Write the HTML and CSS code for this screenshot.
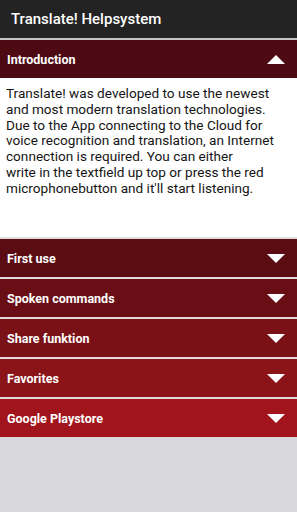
FILE: index.html
```html
<!DOCTYPE html>
<html lang="en">
<head>
    <meta charset="UTF-8">
    <meta name="viewport" content="width=device-width, initial-scale=1.0">
    <title>Translate! Helpsystem</title>
    <link rel="stylesheet" href="styles.css">
</head>
<body>
    <div class="appbar">Translate! Helpsystem</div>
    <div class="accordion">
        <div class="section open">
            <div class="head c0">
                <span>Introduction</span>
                <span class="arrow up"></span>
            </div>
            <div class="body">
                Translate! was developed to use the newest and most modern translation technologies. Due to the App connecting to the Cloud for voice recognition and translation, an Internet connection is required. You can either<br>write in the textfield up top or press the red microphonebutton and it'll start listening.
            </div>
        </div>
        <div class="section">
            <div class="head c1"><span>First use</span><span class="arrow"></span></div>
        </div>
        <div class="section">
            <div class="head c2"><span>Spoken commands</span><span class="arrow"></span></div>
        </div>
        <div class="section">
            <div class="head c3"><span>Share funktion</span><span class="arrow"></span></div>
        </div>
        <div class="section">
            <div class="head c4"><span>Favorites</span><span class="arrow"></span></div>
        </div>
        <div class="section">
            <div class="head c5"><span>Google Playstore</span><span class="arrow"></span></div>
        </div>
    </div>
</body>
</html>
```

FILE: styles.css
```css
html, body {
    margin: 0;
    height: 100%;
}
body {
    font-family: Roboto, "Noto Sans", sans-serif;
    background: #d9d8dd;
    color: #fff;
}
.appbar {
    height: 38px;
    background: #232323;
    font-size: 15px;
    font-weight: 500;
    padding-left: 11px;
    line-height: 38px;
    border-bottom: 2px solid #c9c4c6;
}
.section {
    border-bottom: 2px solid #e3dcde;
}
.section:last-child {
    border-bottom: none;
}
.head {
    height: 38px;
    display: flex;
    align-items: center;
    justify-content: space-between;
    padding: 0 12px 0 7px;
    font-size: 12.5px;
    font-weight: bold;
}
.c0 { background: #4d0a12; }
.c1 { background: #5b0c13; }
.c2 { background: #6a0e15; }
.c3 { background: #7a1117; }
.c4 { background: #8b1419; }
.c5 { background: #a2141b; }
.arrow {
    width: 0;
    height: 0;
    border-left: 9px solid transparent;
    border-right: 9px solid transparent;
    border-top: 9px solid #fff;
}
.arrow.up {
    border-top: none;
    border-bottom: 9px solid #fff;
}
.body {
    background: #fff;
    color: #151515;
    font-size: 13.6px;
    line-height: 15.8px;
    padding: 8px 6px 48px 6px;
    height: 103px;
}
```
